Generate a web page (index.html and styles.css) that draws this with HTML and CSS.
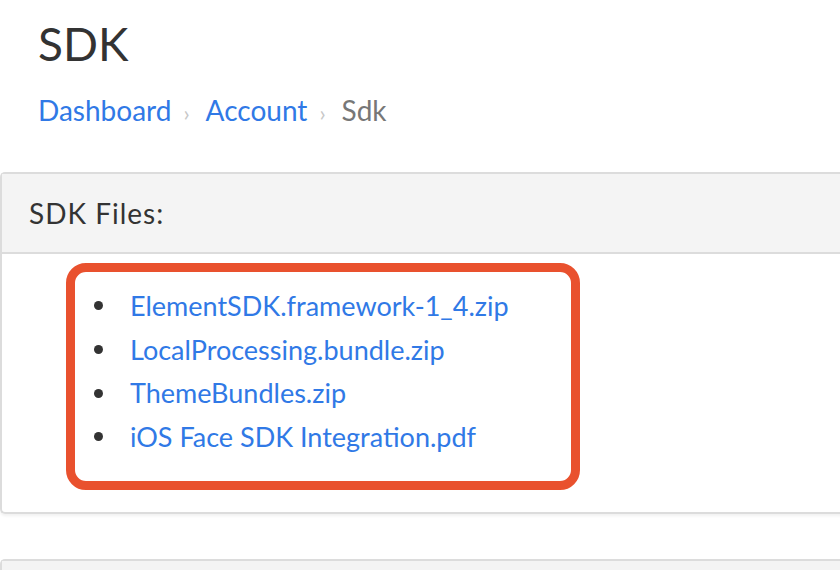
FILE: index.html
```html
<!DOCTYPE html>
<html>
<head>
<meta charset="utf-8">
<link rel="stylesheet" href="styles.css">
</head>
<body>
<div class="page-head">
  <h1 class="title">SDK</h1>
  <nav class="crumbs">
    <a href="#">Dashboard</a><span class="sep">›</span><a href="#">Account</a><span class="sep">›</span><span class="current">Sdk</span>
  </nav>
</div>
<section class="panel">
  <div class="panel-heading">SDK Files:</div>
  <div class="panel-body">
    <div class="highlight">
      <ul class="files">
        <li><a href="#">ElementSDK.framework-1_4.zip</a></li>
        <li><a href="#">LocalProcessing.bundle.zip</a></li>
        <li><a href="#">ThemeBundles.zip</a></li>
        <li><a href="#">iOS Face SDK Integration.pdf</a></li>
      </ul>
    </div>
  </div>
</section>
<section class="panel panel-next">
  <div class="panel-heading panel-heading-stub"></div>
</section>
</body>
</html>
```
FILE: styles.css
```css
html, body {
  margin: 0;
  padding: 0;
  background: #fff;
  overflow: hidden;
}
body {
  font-family: Lato, "Open Sans", sans-serif;
  color: #333;
  width: 840px;
  height: 570px;
}
a {
  color: #3079e6;
  text-decoration: none;
}
.page-head {
  padding: 14px 38px 0;
  height: 158px;
  box-sizing: border-box;
}
.title {
  margin: 0;
  font-weight: 400;
  font-size: 46px;
  line-height: 60px;
  color: #333;
}
.crumbs {
  margin-top: 18px;
  font-size: 28px;
  line-height: 36px;
}
.sep {
  color: #c8c8c8;
  font-size: 22px;
  padding: 0 16px 0 12px;
}
.current {
  color: #777;
}
.panel {
  margin-top: 14px;
  margin-right: -20px;
  border: 2px solid #dcdcdc;
  border-right: 0;
  border-radius: 5px 0 0 5px;
  box-shadow: 0 2px 3px rgba(0,0,0,0.06);
}
.panel-heading {
  background: #f4f4f4;
  padding: 0 27px;
  display: flex;
  align-items: center;
  font-size: 28px;
  letter-spacing: 1px;
  border-bottom: 2px solid #dcdcdc;
  box-sizing: border-box;
  height: 80px;
}
.panel-body {
  padding: 9px 0 22px 64px;
}
.highlight {
  width: 514px;
  height: 227px;
  box-sizing: border-box;
  border: 9px solid #e9512e;
  border-radius: 20px;
}
.files {
  list-style: none;
  margin: 0;
  padding: 12px 0 0 19px;
  font-size: 27px;
  line-height: 43.7px;
}
.files li {
  display: flex;
  align-items: center;
}
.files li::before {
  content: "";
  width: 9px;
  height: 9px;
  border-radius: 50%;
  background: #333;
  margin-right: 27px;
  flex: none;
}
.panel-next {
  margin-top: 45px;
  border-bottom: 0;
  border-radius: 5px 0 0 0;
  box-shadow: none;
}
.panel-heading-stub {
  height: 9px;
  border-bottom: 0;
}
```
